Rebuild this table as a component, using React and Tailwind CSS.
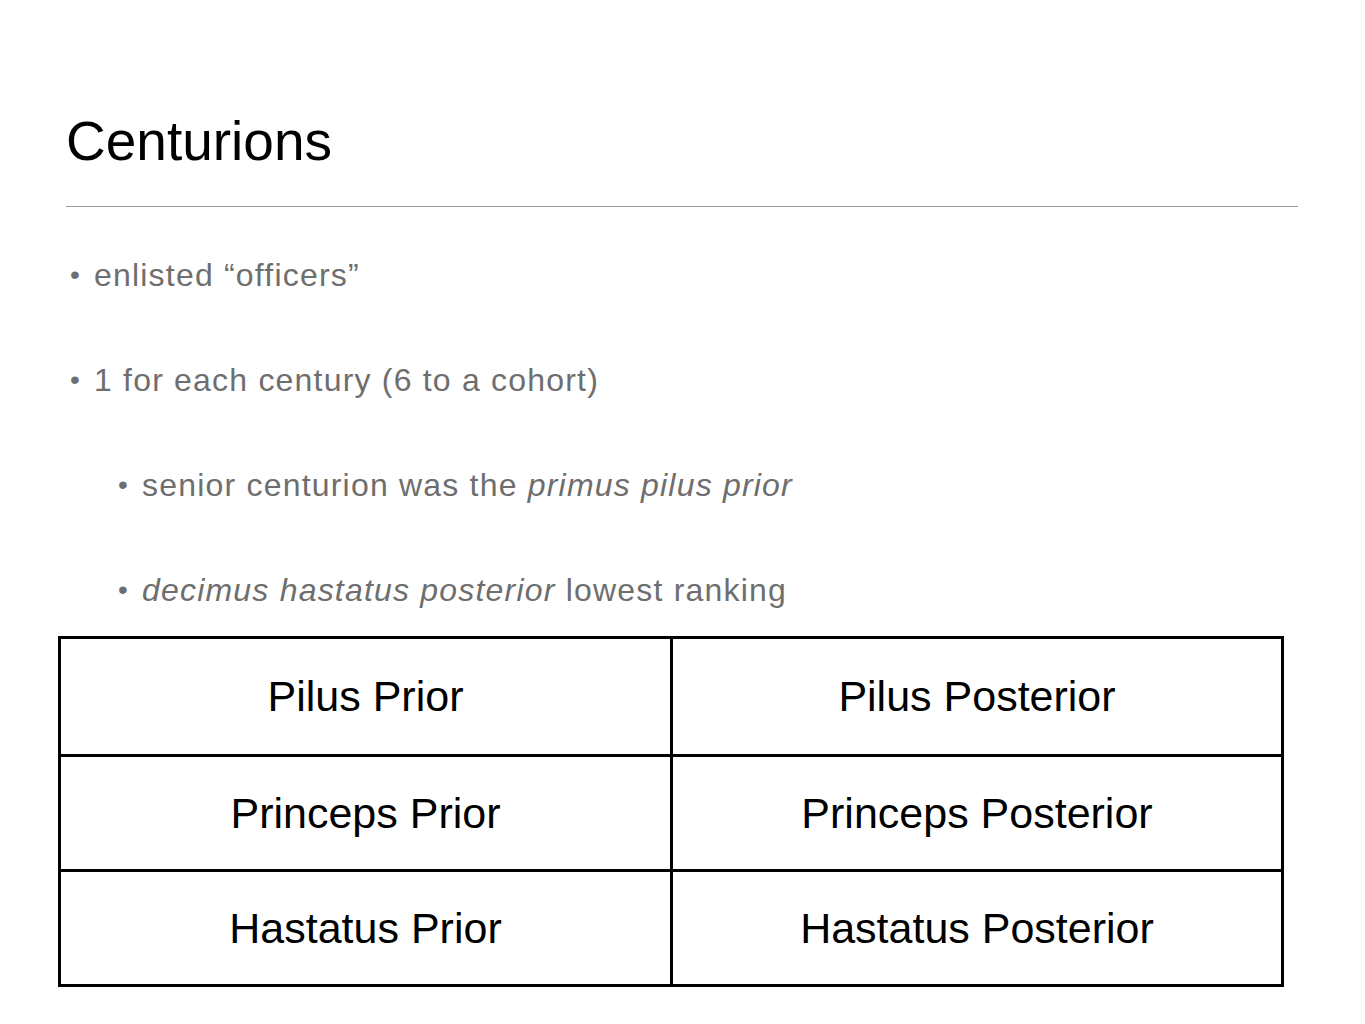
const rows = [
  ['Pilus Prior', 'Pilus Posterior'],
  ['Princeps Prior', 'Princeps Posterior'],
  ['Hastatus Prior', 'Hastatus Posterior'],
]

function Bullet({ children, indent }) {
  return (
    <li
      className={`flex h-[105px] items-start text-[32px] leading-[34px] tracking-[1.2px] text-[#6e6e6e] ${
        indent ? 'pl-[56px]' : 'pl-[8px]'
      }`}
    >
      <span className="w-[24px] shrink-0 text-[28px] tracking-normal">•</span>
      <span>{children}</span>
    </li>
  )
}

function App() {
  return (
    <div
      className="h-[1024px] w-[1365px] overflow-hidden bg-white"
      style={{ fontFamily: '"Liberation Sans", Arial, sans-serif' }}
    >
      <div className="pl-[66px] pr-[67px] pt-[108px]">
        <h1 className="text-[55px] leading-[66px] text-black">Centurions</h1>
        <div className="mt-[32px] h-px bg-[#9a9a9a]" />
      </div>

      <ul className="pl-[62px] pt-[51px]">
        <Bullet>enlisted “officers”</Bullet>
        <Bullet>1 for each century (6 to a cohort)</Bullet>
        <Bullet indent>
          senior centurion was the <em>primus pilus prior</em>
        </Bullet>
        <Bullet indent>
          <em>decimus hastatus posterior</em> lowest ranking
        </Bullet>
      </ul>

      <div className="ml-[58px] mt-[-42px] w-[1226px] border-[3px] border-black">
        {rows.map((row, i) => (
          <div
            key={row[0]}
            className={`grid h-[115px] grid-cols-[612px_1fr] ${
              i > 0 ? 'border-t-[3px] border-black' : ''
            }`}
          >
            <div className="flex items-center justify-center border-r-[3px] border-black text-[43px] text-black">
              {row[0]}
            </div>
            <div className="flex items-center justify-center text-[43px] text-black">
              {row[1]}
            </div>
          </div>
        ))}
      </div>
    </div>
  )
}

export default App
